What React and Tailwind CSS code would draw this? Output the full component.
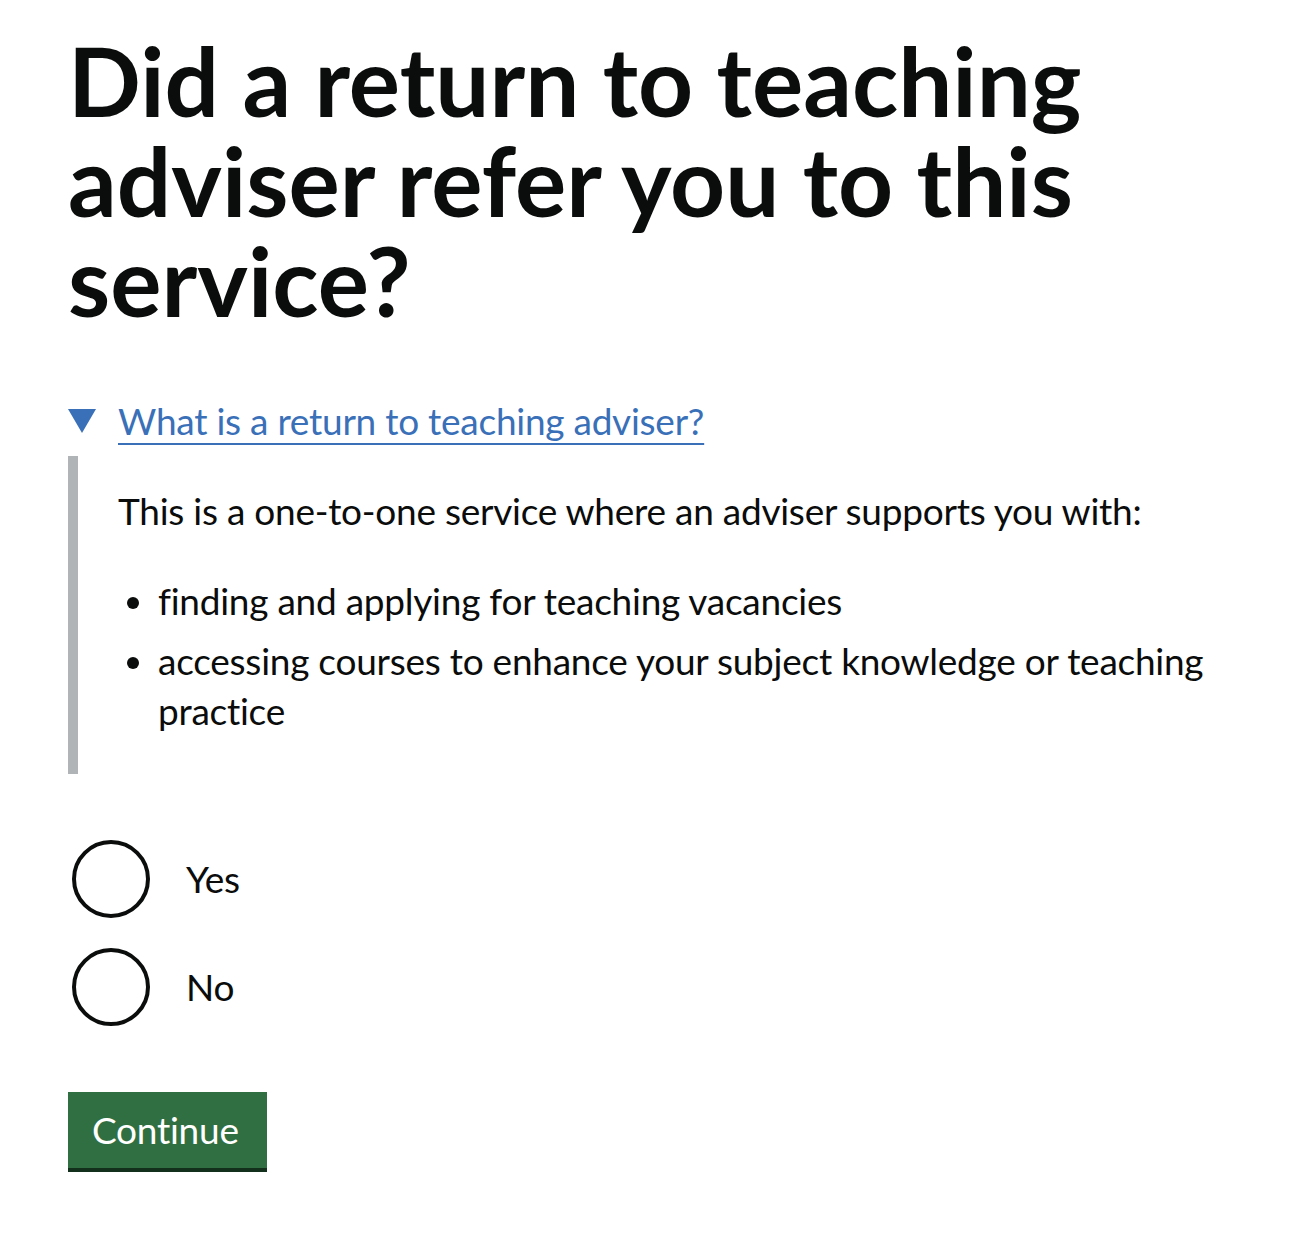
export default function App() {
  const font = { fontFamily: 'Lato, "Noto Sans", Arial, sans-serif' };
  return (
    <div className="bg-white w-[1300px] min-h-[1250px] text-[#0b0c0c]" style={font}>
      <div className="pl-[68px] w-[1245px] pt-[30px]">
        <h1 className="text-[96px] leading-[100px] font-bold m-0 w-[1100px]">
          Did a return to teaching adviser refer you to this service?
        </h1>
        <details open className="mt-[66px]">
          <summary className="list-none flex items-center h-[50px] cursor-pointer">
            <svg width="28" height="24" viewBox="0 0 28 24" className="mr-[22px] shrink-0">
              <polygon points="0,0 28,0 14,24" fill="#3a70b8" />
            </svg>
            <span className="text-[37px] tracking-[-0.25px] leading-[50px] text-[#3a70b8] underline decoration-[2px] underline-offset-[8px]">
              What is a return to teaching adviser?
            </span>
          </summary>
          <div className="mt-[10px] border-l-[10px] border-[#b1b4b6] pl-[40px] pt-[30px] pb-[38px] text-[37px] tracking-[-0.25px] leading-[50px]">
            <p className="mb-[40px]">This is a one-to-one service where an adviser supports you with:</p>
            <ul className="list-disc pl-[40px]">
              <li className="mb-[10px]">finding and applying for teaching vacancies</li>
              <li>accessing courses to enhance your subject knowledge or teaching practice</li>
            </ul>
          </div>
        </details>
        <div className="mt-[66px] flex flex-col gap-[30px]">
          {["Yes", "No"].map((l) => (
            <label key={l} className="flex items-center h-[78px] cursor-pointer">
              <span className="w-[78px] h-[78px] ml-[4px] rounded-full border-[4px] border-[#0b0c0c] shrink-0" />
              <span className="ml-[36px] text-[37px] tracking-[-0.25px] leading-[50px]">{l}</span>
            </label>
          ))}
        </div>
        <button className="mt-[66px] bg-[#306f42] text-white text-[37px] tracking-[-0.25px] leading-[50px] px-[24px] pt-[13px] pb-[13px] shadow-[0_4px_0_#12301c] w-[199px] text-left">
          Continue
        </button>
      </div>
    </div>
  );
}
